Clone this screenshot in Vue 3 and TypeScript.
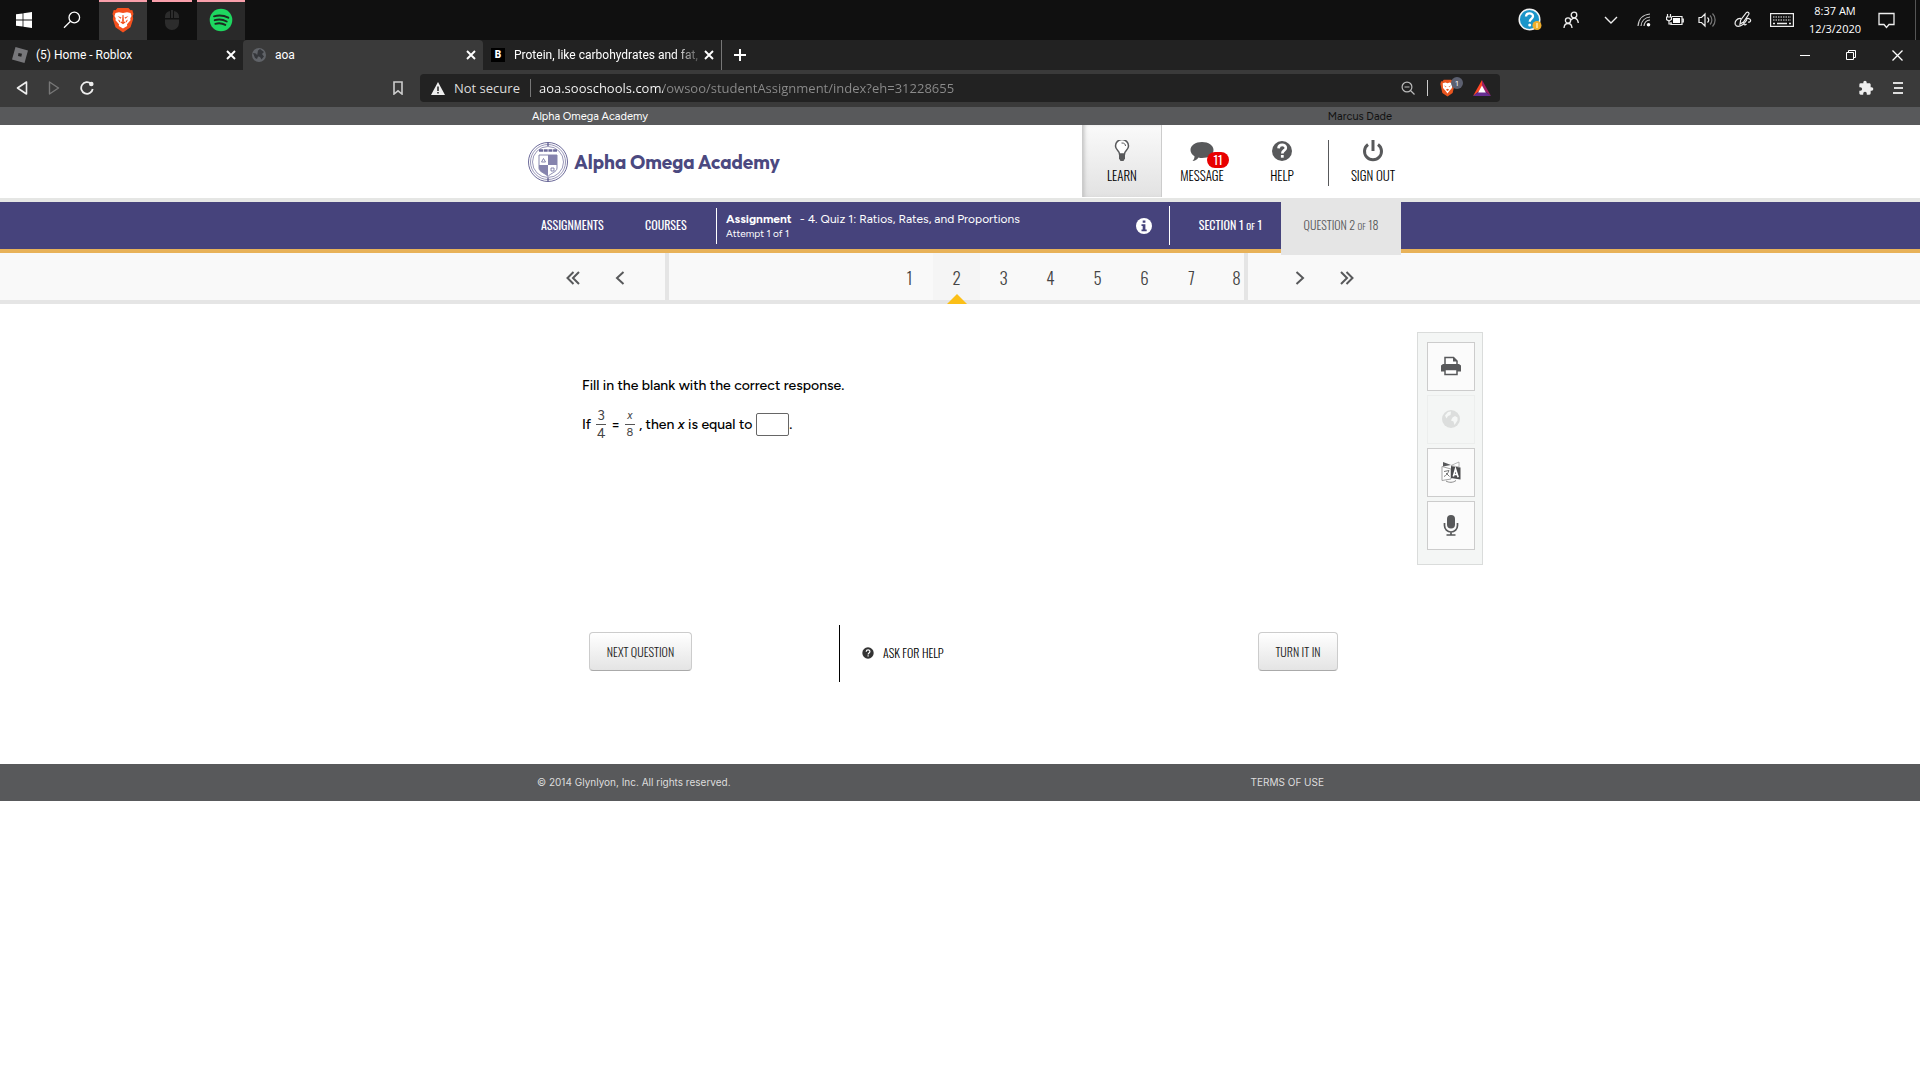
<script setup lang="ts">
import { ref } from 'vue'

interface Tab {
  title: string
  kind: 'roblox' | 'globe' | 'brainly'
  active: boolean
}

const tabs: Tab[] = [
  { title: '(5) Home - Roblox', kind: 'roblox', active: false },
  { title: 'aoa', kind: 'globe', active: true },
  { title: 'Protein, like carbohydrates and fat,', kind: 'brainly', active: false },
]

const questions: number[] = [1, 2, 3, 4, 5, 6, 7, 8]
const current = ref<number>(2)
const answer = ref<string>('')
const address = ref<string>('aoa.sooschools.com/owsoo/studentAssignment/index?eh=31228655')
</script>

<template>
  <div class="screen">
    <div class="taskbar">
      <button class="task start" aria-label="Start">
        <svg width="16" height="16" viewBox="0 0 16 16" fill="#fff"><path d="M0 2.3 6.6 1.4V7.6H0zM7.4 1.3 16 0V7.6H7.4zM0 8.4H6.6V14.6L0 13.7zM7.4 8.4H16V16L7.4 14.7z" /></svg>
      </button>
      <button class="task search" aria-label="Search">
        <svg width="18" height="18" viewBox="0 0 18 18" fill="none" stroke="#fff" stroke-width="1.3"><circle cx="11.3" cy="6.5" r="5.3" /><path d="M7.5 10.3 1 16.8" /></svg>
      </button>
      <button class="task app running front" aria-label="Brave">
        <svg width="22" height="26" viewBox="0 0 22 26">
          <path d="M5.5 1h11l2 2.3 1.8-.2L21.500 7l-.8 2 .5 3-2.700 8.200L11 25.500 3.500 20.200.8 12l.5-3-.8-2 1.200-3.900 1.800.2z" fill="#f4511e" />
          <path d="m3.500 6 3.500-.8 4 .8 4-.8 3.500.8 1 3-1.200 2.200.2 2-3.500 4 .2 1.800L11 21.500 6.800 19l.2-1.800-3.500-4 .2-2L2.500 9z" fill="#fff" />
          <path d="m5.500 9 4 1.500-1 1.200zM16.500 9l-4 1.500 1 1.200zM8.200 15.200 11 14l2.800 1.200L11 17.300zM10.500 8h1l.4 6h-1.800z" fill="#f4511e" />
          <path d="m6 12.500 2.500 1.500-1 1.500zM16 12.500 13.500 14l1 1.500z" fill="#f4511e" />
        </svg>
      </button>
      <button class="task app running small" aria-label="Mouse settings">
        <svg width="16" height="22" viewBox="0 0 16 22" fill="#2c2c2c"><path d="M1 9V8a6 6 0 0 1 5-6v7zM10 2a6 6 0 0 1 5 6v1h-5zM1 10.500h14V14a7 7 0 0 1-14 0zM7 1h2v8H7z" /></svg>
      </button>
      <button class="task app running mid" aria-label="Spotify">
        <svg width="24" height="24" viewBox="0 0 24 24"><circle cx="12" cy="12" r="11.300" fill="#1ed760" /><path d="M5 8.300c5-1.400 10-.9 14.300 1.400M5.700 12.200c4.300-1.200 8.400-.7 12 1.300M6.300 15.800c3.600-1 7-.6 10 1.100" fill="none" stroke="#1c2a20" stroke-width="1.900" stroke-linecap="round" /></svg>
      </button>

      <div class="tray">
        <svg class="t-help" width="24" height="24" viewBox="0 0 24 24"><circle cx="11.500" cy="11.500" r="10.300" fill="#1b95c9" stroke="#f4f4f4" stroke-width="1.500" /><path d="M8 8.500c.2-4.200 7-4.100 7-.3 0 2.700-3.300 2.700-3.300 5.600" fill="none" stroke="#fff" stroke-width="2.300" /><circle cx="11.700" cy="17" r="1.500" fill="#fff" /><circle cx="19" cy="17.500" r="4.500" fill="#f0ae2c" /><path d="M19 15v5" stroke="#fff3c0" stroke-width="1.300" /></svg>
        <svg class="t-people" width="16" height="18" viewBox="0 0 16 18" fill="none" stroke="#eee" stroke-width="1.300"><circle cx="11" cy="4" r="2.800" /><circle cx="5" cy="9.500" r="2.600" /><path d="M1 17c.3-6 7.700-6 8 0M8 9c2.500-3.500 7-2 7.300 3" /></svg>
        <svg class="t-chevron" width="14" height="8" viewBox="0 0 14 8" fill="none" stroke="#eee" stroke-width="1.400"><path d="m1 1 6 6 6-6" /></svg>
        <svg class="t-wifi" width="14" height="14" viewBox="0 0 14 14" fill="none" stroke="#ccc" stroke-width="1.200"><path d="M1 13C1.500 6 6 1.500 13 1M4 13c.4-5 4-8.500 9-9M7 13c.3-3.500 2.500-5.700 6-6" /><circle cx="11.500" cy="11.700" r="1.800" fill="#fff" stroke="none" /></svg>
        <svg class="t-battery" width="18" height="12" viewBox="0 0 18 12" fill="none" stroke="#eee" stroke-width="1.200"><path d="M6 2.500h10v8H5V8M16 5h1.300v3H16M1.500 0v3M4.500 0v3M.5 3h5v2.500L3 7 .5 5.500zM3 7v3h3" /><path d="M7 4h7v5H7z" fill="#fff" stroke="none" /></svg>
        <svg class="t-volume" width="18" height="16" viewBox="0 0 18 16" fill="none" stroke="#eee" stroke-width="1.200"><path d="M1 5.500h2.500L7 2v12l-3.500-3.500H1zM9.500 5.500c1.400 1.400 1.400 3.600 0 5" /><path d="M12 3.500c2.500 2.500 2.500 6.500 0 9M14.500 1.500c3.500 3.500 3.500 9.500 0 13" stroke="#777" /></svg>
        <svg class="t-pen" width="18" height="18" viewBox="0 0 18 18" fill="none" stroke="#eee" stroke-width="1.200"><path d="m6 13 .7-4 5.800-7.500c1.500-1 3 .3 2.300 1.800L9.500 11zM7 7.500C2.500 7 .5 11 1.300 13.500 3 17 9 15.500 13 8.500M10 11.500c-.5 2.500 1 3 2.500 1.500M12 8c2-1 4-.5 4.500 1s-1 2.500-2.500 2" /></svg>
        <svg class="t-keyboard" width="24" height="14" viewBox="0 0 24 14" fill="none" stroke="#eee"><rect x=".6" y=".6" width="22.800" height="12.800" stroke-width="1.200" /><path d="M3 4h18M3 7h18" stroke-dasharray="1.500 1" /><path d="M3 10.500h2M7 10.500h10M19 10.500h2" stroke-width="1.300" /></svg>
        <time class="clock">8:37 AM<br />12/3/2020</time>
        <svg class="t-note" width="17" height="17" viewBox="0 0 17 17" fill="none" stroke="#eee" stroke-width="1.300"><path d="M1 1.500h15v11h-5l-2.500 3-2.500-3H1z" /></svg>
      </div>
    </div>

    <div class="tabstrip">
      <div v-for="tab in tabs" :key="tab.title" class="tab" :class="[{ active: tab.active }, tab.kind]">
        <svg v-if="tab.kind === 'roblox'" width="16" height="16" viewBox="0 0 16 16"><path d="M3.500 0 16 3.400 12.500 16 0 12.500zM6.500 6 6 9l3.300.8L10 6.700z" fill="#77777a" fill-rule="evenodd" /></svg>
        <svg v-else-if="tab.kind === 'globe'" width="16" height="16" viewBox="0 0 16 16"><circle cx="8" cy="8" r="7" fill="#606368" /><path d="M7 3.500 9 2l4 3-2 2 2 2.500-2.500 3L9 10 6 9zM2 6l3 .5 2 3L6 12 4 11z" fill="#34363a" /></svg>
        <span v-else class="tile">B</span>
        <span class="tab-title">{{ tab.title }}</span>
        <button class="close" aria-label="Close tab">
          <svg width="10" height="10" viewBox="0 0 10 10" stroke="#fff" stroke-width="1.900"><path d="m1 1 8 8M9 1 1 9" /></svg>
        </button>
      </div>
      <button class="newtab" aria-label="New tab">
        <svg width="12" height="12" viewBox="0 0 12 12" stroke="#fff" stroke-width="2"><path d="M6 0v12M0 6h12" /></svg>
      </button>
      <div class="window-buttons">
        <button aria-label="Minimize"><svg width="10" height="10" viewBox="0 0 10 10" stroke="#fff"><path d="M0 5.500h10" /></svg></button>
        <button aria-label="Restore"><svg width="10" height="10" viewBox="0 0 10 10" fill="none" stroke="#fff"><path d="M.5 2.500h7v7h-7zM2.500 2.500v-2h7v7h-2" /></svg></button>
        <button aria-label="Close"><svg width="11" height="11" viewBox="0 0 11 11" stroke="#fff" stroke-width="1.300"><path d="m.5.5 10 10M10.500.5l-10 10" /></svg></button>
      </div>
    </div>

    <div class="toolbar">
      <div class="tool-left">
        <button aria-label="Back"><svg width="12" height="14" viewBox="0 0 12 14" fill="none" stroke="#eee" stroke-width="1.600" stroke-linejoin="round"><path d="M10.500 1v12L1.500 7z" /></svg></button>
        <button aria-label="Forward"><svg width="12" height="14" viewBox="0 0 12 14" fill="none" stroke="#777" stroke-width="1.400" stroke-linejoin="round"><path d="M1.500 1v12l9-6z" /></svg></button>
        <button aria-label="Reload"><svg width="14" height="14" viewBox="0 0 14 14"><path d="M11 2.800A5.800 5.800 0 1 0 12.700 8" fill="none" stroke="#eee" stroke-width="1.800" /><circle cx="11.300" cy="3" r="2.300" fill="#eee" /></svg></button>
        <button class="bookmark" aria-label="Bookmark"><svg width="10" height="14" viewBox="0 0 10 14" fill="none" stroke="#ccc" stroke-width="1.600"><path d="M1 1h8v12L5 9.800 1 13z" /></svg></button>
      </div>
      <div class="omnibox">
        <svg width="14" height="13" viewBox="0 0 14 13"><path d="M7 0 14 13H0z" fill="#eee" /><path d="M7 4.500V9M7 10v1.500" stroke="#222" stroke-width="1.500" /></svg>
        <label for="address" class="secure">Not secure</label>
        <input id="address" v-model="address" class="address" type="text" />
        <svg class="zoom-out" width="14" height="14" viewBox="0 0 14 14" fill="none" stroke="#bbb" stroke-width="1.200"><circle cx="6" cy="6" r="4.900" /><path d="m9.500 9.500 4 4M3.500 6h5" /></svg>
        <span class="bar"></span>
        <span class="shield">
          <svg width="15" height="18" viewBox="0 0 22 26"><path d="M5.500 1h11l2 2.300 1.800-.2L21.500 7 18.500 20.200 11 25.500 3.500 20.200.5 7l1.200-3.900 1.800.2z" fill="#e9551f" /><path d="m4 6 4-1 3 1 3-1 4 1-.5 7-3.500 4L11 21l-3-4-3.500-4z" fill="#fff" /><path d="m5.500 9 4 2-1 1zM16.500 9l-4 2 1 1zM8.500 15.500 11 14l2.500 1.500L11 17.500z" fill="#e9551f" /></svg>
          <span class="shield-count">1</span>
        </span>
        <svg width="18" height="16" viewBox="0 0 18 16"><path d="M9 0 0 16 9 9z" fill="#ff4724" /><path d="m9 0 9 16-9-7z" fill="#9e1f63" /><path d="M0 16h18L9 9z" fill="#662d91" /><path d="m9 5.500 3.800 7H5.200z" fill="#fff" /></svg>
      </div>
      <div class="tool-right">
        <button aria-label="Extensions"><svg width="16" height="16" viewBox="0 0 24 24" fill="#eee"><path d="M20.500 11H19V7c0-1.100-.9-2-2-2h-4V3.500a2.500 2.500 0 0 0-5 0V5H4a2 2 0 0 0-2 2v3.800h1.500a2.700 2.700 0 0 1 0 5.400H2V20c0 1.100.9 2 2 2h3.800v-1.500a2.700 2.700 0 0 1 5.400 0V22H17a2 2 0 0 0 2-2v-4h1.500a2.500 2.500 0 0 0 0-5z" /></svg></button>
        <button aria-label="Menu"><svg width="10" height="14" viewBox="0 0 10 14" stroke="#ddd" stroke-width="2"><path d="M0 2h10M1 7h9M0 12h10" /></svg></button>
      </div>
    </div>

    <div class="topbar">
      <div class="wrap topbar-row"><span>Alpha Omega Academy</span><span class="user">Marcus Dade</span></div>
    </div>

    <header class="header">
      <div class="wrap header-row">
        <a href="#" class="logo">
          <svg width="42" height="42" viewBox="0 0 42 42" fill="none" stroke="#6b6999">
            <circle cx="21" cy="21" r="19.500" stroke-width="1" /><circle cx="21" cy="21" r="17.500" stroke-width=".7" /><circle cx="21" cy="21" r="15.500" stroke-width=".7" />
            <path d="M21 1v4M21 37v4" stroke-width="1.500" />
            <path d="M12 9.500h18" stroke-width="2.500" stroke-dasharray="4 .7" />
            <path d="M12 14h18v13c0 4-6 5-9 8.500-3-3.500-9-4.500-9-8.500z" fill="#fff" stroke-width=".8" />
            <path d="M21 14h9v10h-9zM12 24h9v11.500C18 32 12 31 12 27z" fill="#8583ad" stroke="none" />
            <path d="m16.500 17.500 2 3.500h-4zM24 27h3v3h-3z" stroke-width=".8" />
          </svg>
          <span>Alpha Omega Academy</span>
        </a>
        <nav class="main-nav">
          <a href="#" class="item on">
            <svg width="20" height="22" viewBox="0 0 20 22"><path d="M7.500 14c0-3-4-4-4-8a6.500 6.500 0 0 1 13 0c0 4-4 5-4 8z" fill="#fff" stroke="#58595b" stroke-width="1.500" /><path d="M7 14h6v4.500L11.500 21h-3L7 18.500z" fill="#58595b" /><path d="M9.500 3c3-.3 4 1.500 4 3" fill="none" stroke="#58595b" /></svg>
            <span>LEARN</span>
          </a>
          <a href="#" class="item">
            <svg width="24" height="22" viewBox="0 0 24 22" fill="#58595b"><path d="M12 2c6.500 0 11.500 3.500 11.500 8s-5 8-11.500 8c-1.300 0-2.500 0-3.500-.5C7 19.500 5 21 2.500 21c1.300-1 2-2.700 2-4.700C2 14.800.5 12.500.5 10 .5 5.500 5.500 2 12 2z" /></svg>
            <span>MESSAGE</span>
            <b class="badge">11</b>
          </a>
          <a href="#" class="item">
            <svg width="22" height="22" viewBox="0 0 22 22"><circle cx="11" cy="11" r="10" fill="#58595b" /><path d="M7.500 8.300c.3-4.500 7.300-4.300 7.300-.4 0 2.500-3.500 2.600-3.500 5.500" fill="none" stroke="#fff" stroke-width="2.700" /><path d="M9.900 15h2.800v2.700H9.900z" fill="#fff" /></svg>
            <span>HELP</span>
          </a>
          <span class="rule"></span>
          <a href="#" class="item last">
            <svg width="22" height="22" viewBox="0 0 22 22" fill="none" stroke="#58595b" stroke-width="3"><path d="M6 4.500a8.500 8.500 0 1 0 10 0" /><path d="M11 0v11" /></svg>
            <span>SIGN OUT</span>
          </a>
        </nav>
      </div>
    </header>

    <div class="band">
      <div class="wrap band-row">
        <a href="#" class="link">ASSIGNMENTS</a>
        <a href="#" class="link courses">COURSES</a>
        <div class="assignment">
          <div class="line"><b>Assignment</b><span>- 4. Quiz 1: Ratios, Rates, and Proportions</span></div>
          <div class="attempt">Attempt 1 of 1</div>
        </div>
        <button class="info" aria-label="Information">
          <svg width="16" height="16" viewBox="0 0 16 16"><circle cx="8" cy="8" r="8" fill="#fff" /><path d="M6.700 2.500h2.700v2.300H6.700zM5.500 6.300h3.900v5.200h1.300v1.800H5.500v-1.800h1.200V8H5.500z" fill="#46437c" /></svg>
        </button>
        <div class="section">SECTION 1 <small>OF</small> 1</div>
        <div class="question-count">QUESTION 2 <small>OF</small> 18</div>
      </div>
    </div>

    <div class="pager">
      <div class="wrap pager-row">
        <div class="arrows back">
          <button aria-label="First question"><svg width="14" height="14" viewBox="0 0 14 14"><path d="M7.500 1 1.500 7l6 6M13 1 7 7l6 6" /></svg></button>
          <button aria-label="Previous question"><svg width="10" height="14" viewBox="0 0 10 14"><path d="M8.500 1 2 7l6.500 6" /></svg></button>
        </div>
        <div class="numbers">
          <button v-for="n in questions" :key="n" class="num" :class="{ sel: n === current }" @click="current = n">{{ n }}</button>
        </div>
        <div class="arrows fwd">
          <button aria-label="Next question"><svg width="10" height="14" viewBox="0 0 10 14"><path d="M1.500 1 8 7l-6.500 6" /></svg></button>
          <button aria-label="Last question"><svg width="14" height="14" viewBox="0 0 14 14"><path d="m1 1 6 6-6 6M6.500 1l6 6-6 6" /></svg></button>
        </div>
      </div>
    </div>

    <main class="main">
      <section class="body">
        <div class="prompt">
          <p>Fill in the blank with the correct response.</p>
          <div class="equation">
            <span>If</span>
            <span class="frac"><span>3</span><span>4</span></span>
            <span>=</span>
            <span class="frac mini"><span><i>x</i></span><span>8</span></span>
            <label for="answer">, then <i>x</i> is equal to</label>
            <input id="answer" v-model="answer" type="text" /><span class="dot">.</span>
          </div>
        </div>
        <div class="actions">
          <button class="btn">NEXT QUESTION</button>
          <a href="#" class="ask">
            <svg width="12" height="12" viewBox="0 0 12 12"><circle cx="6" cy="6" r="5.700" fill="#333" /><path d="M4.200 4.700c.1-2.400 3.700-2.300 3.700-.2C7.900 5.900 6.100 6 6.100 7.500" fill="none" stroke="#fff" stroke-width="1.200" /><path d="M5.500 8.200h1.200v1.200H5.500z" fill="#fff" /></svg>
            ASK FOR HELP
          </a>
          <button class="btn turn">TURN IT IN</button>
        </div>
      </section>
      <aside class="tools">
        <button aria-label="Print"><svg width="20" height="20" viewBox="0 0 20 20"><path d="M4 10V1.500h8.500L16 5v5" fill="#fff" stroke="#58595b" stroke-width="1.500" /><path d="M12 1v4.500h4.500z" fill="#58595b" /><path d="M0 9.500 2 8h16l2 1.500v6H0z" fill="#58595b" /><path d="M4 13.500h12v5H4z" fill="#fff" stroke="#58595b" stroke-width="1.500" /></svg></button>
        <button disabled aria-label="Web"><svg width="20" height="20" viewBox="0 0 20 20"><circle cx="10" cy="10" r="9" fill="#dcdedd" /><path d="M4 6.500 7 3l3-.5L9.500 6 7 7l-1.500 2.500zM11.500 8.500 14 7l2.500 1.500v3L13.500 16l-1-3.500-2.500-1z" fill="#f5f7f6" /></svg></button>
        <button aria-label="Translate"><svg width="20" height="22" viewBox="0 0 20 22"><path d="M1 5.500 10 8v10l-9 1.500z" fill="#fff" stroke="#999" stroke-width=".9" /><path d="m10 5 9.500 1.500v12L10 17z" fill="#4c4c4e" /><path d="M2 1 10 4 2 5.500z" fill="#58595b" /><path d="M10 4.500 18 1v5z" fill="#fff" stroke="#999" stroke-width=".7" /><path d="m12.300 15.500 2.200-7.500 2.700 8.200M13 13.200l3.500.5" fill="none" stroke="#fff" stroke-width="1.600" /><path d="M3 10.500 8 9.500c-1 3-3 5-5 6M5 12l3.500 3.500" fill="none" stroke="#777" /><path d="M5 20c3 1.800 7 1.800 10-.5" fill="none" stroke="#888" /></svg></button>
        <button aria-label="Record"><svg width="16" height="22" viewBox="0 0 16 22"><rect x="4" y="1" width="8" height="13.500" rx="4" fill="#58595b" /><path d="M1.500 9v2.500a6.500 6.500 0 0 0 13 0V9M8 18v3M3.500 21h9" fill="none" stroke="#58595b" stroke-width="1.700" /></svg></button>
      </aside>
    </main>

    <footer class="footer">
      <div class="wrap footer-row"><span>© 2014 Glynlyon, Inc. All rights reserved.</span><a href="#">TERMS OF USE</a></div>
    </footer>
  </div>
</template>

<style>
html,
body {
  margin: 0;
  background: #fff;
}
</style>

<style scoped>
.screen {
  --ui: 'Segoe UI', 'Open Sans', 'Noto Sans', sans-serif;
  --narrow: 'Oswald', 'Liberation Sans Narrow', 'Open Sans Condensed', sans-serif;
  --text: 'Proxima Nova', 'Figtree', 'Montserrat', 'Inter', sans-serif;
  font-family: var(--text);
  color: #000;
}
* {
  box-sizing: border-box;
}
button {
  padding: 0;
  border: 0;
  background: none;
  color: inherit;
  font: inherit;
  cursor: pointer;
}
a {
  color: inherit;
  text-decoration: none;
}
svg {
  display: block;
  flex: none;
}
.wrap {
  width: 100%;
  max-width: 880px;
  margin: 0 auto;
}

/* taskbar */
.taskbar {
  display: flex;
  height: 40px;
  background: #101010;
  font-family: var(--ui);
}
.task {
  display: flex;
  align-items: center;
  justify-content: center;
  width: 48px;
}
.search {
  margin-right: 3px;
}
.running {
  padding-bottom: 2px;
  border-top: 2px solid #f99fab;
}
.front {
  background: #353535;
}
.small {
  width: 40px;
  margin: 0 5px;
}
.mid {
  background: #292929;
}
.tray {
  display: flex;
  align-items: center;
  margin-left: auto;
  margin-right: 4px;
  padding-right: 20px;
  border-right: 1px solid #555;
}
.t-people { margin-left: 21px; }
.t-chevron { margin-left: 25px; }
.t-wifi { margin-left: 19px; }
.t-battery { margin-left: 15px; }
.t-volume { margin-left: 14px; }
.t-pen { margin-left: 18px; }
.t-keyboard { margin-left: 18px; }
.clock {
  width: 60px;
  margin: 0 13px 0 11px;
  color: #fff;
  font-size: 11px;
  line-height: 18px;
  text-align: center;
}

/* tab strip */
.tabstrip {
  display: flex;
  height: 30px;
  background: #222;
  color: #fff;
  font-family: 'Segoe UI', Roboto, 'Open Sans', sans-serif;
}
.tab {
  display: flex;
  align-items: center;
  width: 240px;
  padding: 0 7px 1px 8px;
  font-size: 12px;
}
.tab.roblox {
  width: 243px;
  padding-left: 12px;
}
.tab.brainly {
  width: 239px;
  border-right: 1px solid #777;
}
.tab.active {
  border-radius: 4px 4px 0 0;
  background: #3a3a3a;
}
.tab-title {
  flex: 1;
  min-width: 0;
  margin: 0 3px 0 8px;
  overflow: hidden;
  white-space: nowrap;
}
.tab.brainly .tab-title {
  mask-image: linear-gradient(90deg, #000 160px, transparent 192px);
}
.tile {
  width: 14px;
  background: #000;
  font: 900 10px/14px Roboto, sans-serif;
  text-align: center;
}
.tile + .tab-title {
  margin-left: 9px;
}
.newtab {
  padding: 0 12px;
}
.window-buttons {
  display: flex;
  margin-left: auto;
}
.window-buttons button {
  display: flex;
  align-items: center;
  justify-content: center;
  width: 46px;
}

/* toolbar */
.toolbar {
  display: grid;
  grid-template-columns: 1fr minmax(0, 1080px) 1fr;
  align-items: center;
  height: 37px;
  padding-bottom: 1px;
  background: #3a3a3a;
  font-family: var(--ui);
}
.tool-left {
  display: flex;
  align-items: center;
  gap: 20px;
  padding: 0 17px 0 16px;
}
.bookmark {
  margin-left: auto;
}
.omnibox {
  display: flex;
  align-items: center;
  height: 28px;
  padding: 0 9px 0 11px;
  border-radius: 4px;
  background: #222;
  color: #ddd;
  font-size: 13px;
}
.secure {
  margin-left: 9px;
  padding-right: 10px;
  border-right: 1px solid #777;
  white-space: nowrap;
}
.address {
  flex: 1;
  min-width: 0;
  padding: 0 8px;
  border: 0;
  outline: 0;
  background: linear-gradient(90deg, #fff 132px, #8c8c8c 132px);
  background-clip: text;
  color: transparent;
  font: 13px var(--ui);
}
.bar {
  width: 1px;
  height: 16px;
  margin: 0 12px;
  background: #ccc;
}
.shield {
  position: relative;
  margin-right: 18px;
}
.shield-count {
  position: absolute;
  top: -2px;
  left: 11px;
  width: 12px;
  border-radius: 6px;
  background: #5c6070;
  color: #fff;
  font-size: 8px;
  line-height: 12px;
  text-align: center;
}
.tool-right {
  display: flex;
  align-items: center;
  justify-content: flex-end;
  gap: 19px;
  padding-right: 17px;
}

/* site top bar and header */
.topbar {
  padding-top: 1px;
  background: #58595b;
  color: #fff;
  font-size: 11px;
  line-height: 17px;
}
.topbar-row {
  display: flex;
  justify-content: space-between;
  padding: 0 8px 0 12px;
}
.user {
  color: #111;
}
.header {
  border-bottom: 4px solid #e5e6e4;
}
.header-row {
  display: flex;
  justify-content: space-between;
  height: 73px;
}
.logo {
  display: flex;
  align-items: center;
  gap: 5px;
  margin-left: 7px;
  color: #4b4980;
  font: 700 19px Outfit, Figtree, Poppins, Lato, sans-serif;
  white-space: nowrap;
}
.main-nav {
  display: flex;
  height: 72px;
  font-family: var(--narrow);
  font-size: 13px;
  font-weight: 300;
}
.item {
  position: relative;
  display: flex;
  flex-direction: column;
  align-items: center;
  gap: 5px;
  width: 80px;
  padding-top: 15px;
  line-height: 16px;
}
.item.on {
  border: 1px solid #ccc;
  border-width: 0 1px;
  background: linear-gradient(#fafafa, #e2e2e2);
  box-shadow: inset 3px 0 4px -2px #bbb;
}
.badge {
  position: absolute;
  top: 27px;
  left: 45px;
  width: 22px;
  border-radius: 8px;
  background: #e80000;
  color: #fff;
  font-size: 12px;
  font-weight: normal;
  text-align: center;
}
.rule {
  width: 1px;
  height: 46px;
  margin: 15px 4px 0 6px;
  background: #58595b;
}
.item.last {
  margin-right: -13px;
}

/* purple band */
.band {
  border-bottom: 4px solid #e8b259;
  background: #46437c;
  color: #fff;
}
.band-row {
  display: flex;
  align-items: center;
  height: 47px;
}
.link,
.section,
.question-count {
  font-family: var(--narrow);
  font-size: 12px;
  white-space: nowrap;
}
.link {
  width: 104px;
  padding: 0 0 2px 21px;
}
.link.courses {
  width: 92px;
}
.assignment {
  flex: 1;
  height: 36px;
  padding: 4px 0 0 9px;
  border-left: 1px solid #fff;
}
.line {
  display: flex;
  gap: 8px;
  font-size: 12px;
  line-height: 15px;
  white-space: nowrap;
}
.attempt {
  font-size: 10px;
  line-height: 13px;
}
.info {
  margin-right: 17px;
}
.section {
  width: 112px;
  padding-right: 19px;
  border-left: 1px solid #fff;
  line-height: 38px;
  text-align: right;
}
small {
  font-size: 9px;
}
.question-count {
  align-self: flex-start;
  width: 120px;
  margin: -4px -1px -4px 0;
  background: #e5e5e5;
  color: #58595b;
  font-weight: 300;
  line-height: 53px;
  padding-bottom: 2px;
  text-align: center;
}

/* pager */
.pager {
  border-bottom: 4px solid #e5e5e5;
  background: #f9f9f9;
}
.pager-row {
  display: flex;
  height: 47px;
}
.arrows {
  display: flex;
  align-items: center;
  padding-top: 2px;
}
.arrows svg {
  fill: none;
  stroke: #58595b;
  stroke-width: 2;
}
.back {
  gap: 35px;
  width: 145px;
  padding-left: 46px;
}
.fwd {
  gap: 35px;
  width: 152px;
  padding-left: 47px;
}
.numbers {
  display: flex;
  flex: 1;
  justify-content: flex-end;
  border: 4px solid #e5e5e5;
  border-width: 0 4px;
}
.num {
  position: relative;
  width: 47px;
  padding-top: 2px;
  color: #444;
  font-family: var(--narrow);
  font-size: 17px;
  font-weight: 300;
}
.num:last-child {
  width: 29px;
  padding-left: 14px;
}
.num.sel {
  background: #f5f5f5;
}
.num.sel::after {
  position: absolute;
  bottom: -4px;
  left: 14px;
  border: 10px solid transparent;
  border-top: 0;
  border-bottom-color: #fbbf18;
  content: '';
}

/* question */
.main {
  display: grid;
  grid-template-columns: 1fr minmax(0, 880px) 1fr;
  height: 460px;
}
.body {
  grid-column: 2;
  padding: 72px 62px 0;
}
.prompt {
  height: 249px;
  font-size: 14px;
  font-weight: 500;
}
p {
  margin: 0;
  line-height: 20px;
}
.equation {
  display: flex;
  align-items: center;
  margin-top: 10px;
  height: 36px;
}
.frac {
  display: flex;
  flex-direction: column;
  width: 10px;
  margin: 0 5px;
  color: #444;
  font: 14px/17px var(--text);
  text-align: center;
}
.frac span + span {
  border-top: 1px solid #555;
}
.mini {
  margin-right: 4px;
  font-size: 11px;
  line-height: 16px;
}
.equation label {
  margin-right: 4px;
  white-space: pre;
}
.equation input {
  width: 33px;
  height: 23px;
  border: 1px solid #666;
  border-radius: 2px;
  background: #fff;
}
.actions {
  display: flex;
  align-items: center;
  height: 57px;
  padding: 0 0 0 7px;
  font-family: var(--narrow);
  font-size: 12px;
  font-weight: 300;
}
.btn {
  width: 103px;
  height: 39px;
  margin-bottom: 4px;
  padding-bottom: 1px;
  border: 1px solid #ccc;
  border-bottom-color: #aaa;
  border-radius: 4px;
  background: linear-gradient(#fff, #e4e4e4);
  color: #222;
}
.ask {
  display: flex;
  align-items: center;
  gap: 9px;
  height: 57px;
  margin-left: 147px;
  padding: 0 0 2px 22px;
  border-left: 1px solid #000;
}
.turn {
  width: 80px;
  margin-left: auto;
}
.tools {
  display: flex;
  flex-direction: column;
  gap: 4px;
  width: 66px;
  height: 233px;
  margin: 28px 0 0 17px;
  padding: 9px;
  border: 1px solid #dadcdb;
  background: #f4f6f5;
}
.tools button {
  display: flex;
  align-items: center;
  justify-content: center;
  width: 48px;
  height: 49px;
  padding-bottom: 2px;
  border: 1px solid #ccc;
  background: #fbfbfb;
}
.tools button:disabled {
  border-color: #eceeed;
  background: #f4f6f5;
}

/* footer */
.footer {
  background: #58595b;
  color: #ddd;
  font-family: 'Inter', sans-serif;
  font-size: 10px;
  line-height: 37px;
}
.footer-row {
  display: flex;
  justify-content: space-between;
  padding: 0 76px 0 17px;
}
</style>
